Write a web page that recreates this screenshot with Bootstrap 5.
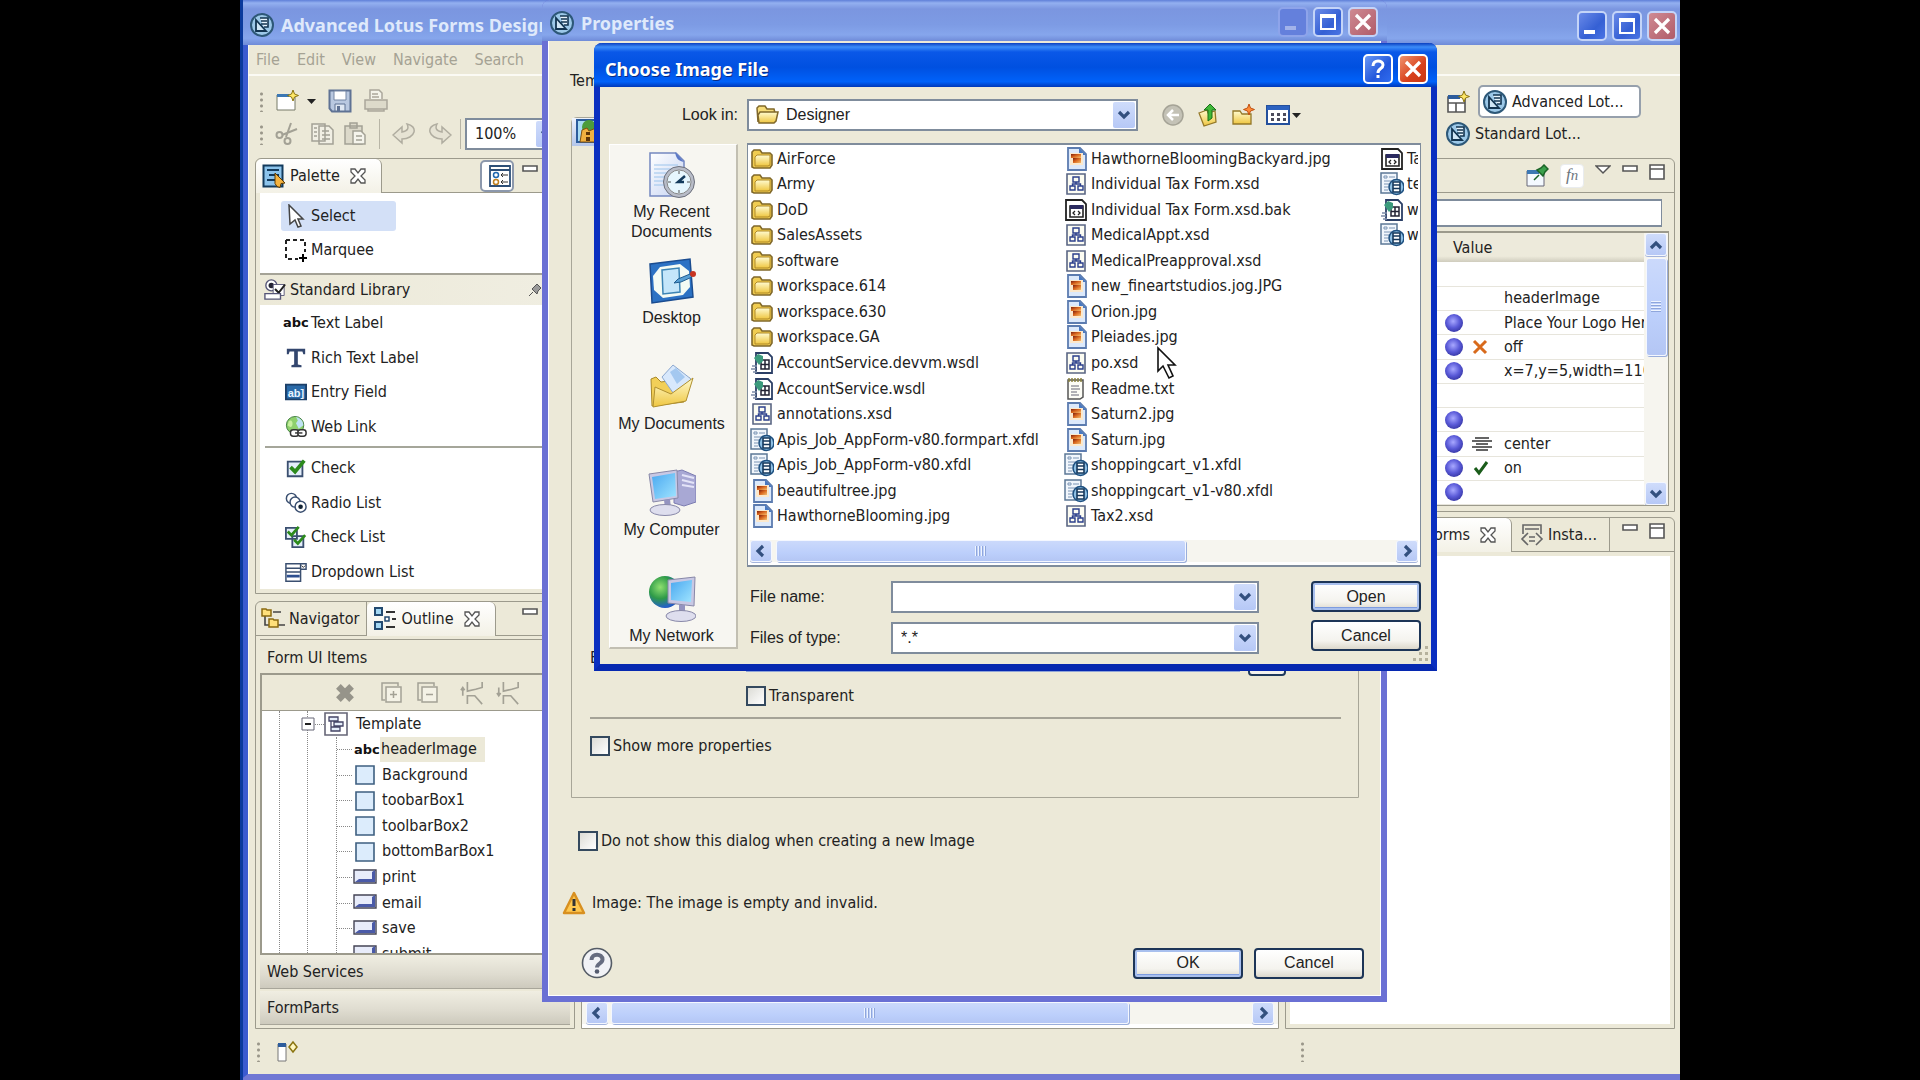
<!DOCTYPE html>
<html lang="en">
<head>
<meta charset="utf-8">
<meta name="viewport" content="width=device-width, initial-scale=1">
<title>Advanced Lotus Forms Designer</title>
<link href="https://cdn.jsdelivr.net/npm/bootstrap@5.3.0/dist/css/bootstrap.min.css" rel="stylesheet">
<style>
:root{--face:#ece9d8;--rule:#9c9a8c;--field:#7f8c9c}
body{background:#000;font:16px/20px "DejaVu Sans Condensed","DejaVu Sans",sans-serif;color:#222;overflow:hidden}
a{color:inherit;text-decoration:none}
button,select,input{font:inherit;color:inherit}
ul{list-style:none;margin:0;padding:0}
svg{flex:none;display:block}
.i24{width:24px;height:24px}.i22{width:22px;height:22px}.i48{width:48px;height:48px}
.i20{width:20px;height:18px}.i16{width:16px;height:16px}.i14{width:14px;height:14px}
.g2x{gap:2px}.g3x{gap:3px}.g5x{gap:5px}.g7x{gap:7px}.g8x{gap:8px}.g9x{gap:9px}.g11x{gap:11px}.g12x{gap:12px}
.ms-sans{font-family:"Liberation Sans",Arial,sans-serif}
.desk{width:75%;height:100vh}
.win-main{height:100%;background:var(--face);border-left:8px solid #3b5bd0;border-bottom:6px solid #7078d4;border-right:0;box-shadow:inset 1px 0 #f8f7ee}
.win-main::before{content:"";position:absolute;left:0;top:0;bottom:0;width:3px;background:#0b3a9c}
.ttl{background:linear-gradient(#5f7fd8 0,#93b0f0 3px,#7b96e0 9px,#7d9be4 60%,#86a6ec 85%,#6f8bd8 100%);color:#dfe9fb;font:bold 18px/22px "Noto Sans","Open Sans",sans-serif;white-space:nowrap}
.ttl-main{height:45px;margin-left:-5px;padding:8px 3px 0 7px}
.ttl-prop{height:41px;padding:4px 9px 0 8px;margin:0 -6px;border-radius:8px 8px 0 0}
.ttl-file{height:44px;padding:7px 9px 0 11px;margin:0 -6px;border-radius:8px 8px 0 0;background:linear-gradient(#0a3fc0 0,#3c8cf8 4px,#0a58e8 9px,#0050e0 55%,#0062fa 88%,#0038b8 100%);color:#fff;text-shadow:1px 1px #0a2a80}
.caps{display:flex;gap:5px;padding-top:3px}
.cap{width:30px;height:30px;border:2px solid #c4d4f8;border-radius:5px;background:linear-gradient(135deg,#6a8ae8,#3560d4 60%,#4a74e4);padding:0;display:flex;align-items:center;justify-content:center;color:#fff}
.cap svg{width:22px;height:22px}
.cap-x{background:linear-gradient(135deg,#cf8a92,#b05c6a)}
.cap-off{border-color:#8ea4ea;background:#6480dc}
.cap-off svg{opacity:.4}
.ttl-file .cap{border-color:#fff;background:linear-gradient(135deg,#6a98f4,#2358dc 60%,#2f6cf0)}
.ttl-file .cap-x{background:linear-gradient(135deg,#f0926c,#d8401c 60%,#c83814)}
.menus{height:31px;border-bottom:2px solid #fbfaf4;padding:0 8px;gap:17px;color:#a5a294}
.dots{width:3px;height:21px;background:radial-gradient(circle,#9a978a 1px,transparent 2px) 0 0/3px 6px}
.tool-a{height:34px}.tool-b{height:32px}
.tool-a .dots,.tool-b .dots{margin:0 12px 0 4px}
.caret{width:9px;height:5px}
.bar-v{width:1px;height:30px;background:#b8b5a6}
.zoomer{width:96px}
.perspbar{width:234px;padding-top:1px}
.persp{border:2px solid #96a0ac;border-radius:5px;background:#fff;height:33px;padding:0 10px 0 3px;width:163px}
.plainbtn{border:0;background:none;padding:0}
.bench{display:grid;grid-template-columns:320px minmax(0,1fr) 390px;gap:6px;padding:8px 5px 0 7px}
.pane{border:1px solid var(--rule);border-radius:6px 6px 0 0;background:var(--face)}
.tabs{height:34px;border-bottom:1px solid var(--rule)}
.tabx{height:34px;border:0;border-right:1px solid var(--rule);background:none;display:flex;align-items:center;white-space:nowrap;padding:0 7px 0 5px}
.tabx.on{background:linear-gradient(#fff,#f3f1e6);border-radius:6px 6px 0 0;padding:0 9px 0 6px}
.tabx.cut{padding-left:50px}
.tabx.insta{padding:0 12px 0 8px}
.tab-tools{display:flex;gap:11px;padding:5px 9px 0 12px}
.pal-on{height:32px;width:34px;border:2px solid #8c98ac;border-radius:5px;background:#fff;margin-top:-4px;margin-right:-3px}
.fnb{width:24px;height:24px;font:italic 17px/20px "Liberation Serif",serif;text-align:center}
.paper{background:#fff}
.pick-area{padding:8px 0 8px 21px}
.pick{height:30px;width:115px;padding-left:3px;gap:3px}
.pick.on{background:#d3e0f7;border-radius:3px;margin-bottom:4px}
.lib-head{height:32px;border-top:2px solid #a5a397;background:linear-gradient(90deg,#ece9d8,#f0eee2);padding-right:32px}
.lib{display:grid;grid-template-rows:repeat(4,1fr);height:138px;padding-left:25px}
.lib button,.tree3 li{display:flex;align-items:center;gap:4px;white-space:nowrap}
.lib-first{padding-top:1px;height:139px}
.hr-lib{height:2px;background:#a5a69a;margin:2px 0 3px 5px}
.abc{font:bold 13px/16px "DejaVu Sans","DejaVu Sans Condensed",sans-serif;color:#111;width:22px;margin-left:-2px;margin-right:2px}
.box-in{border:1px solid var(--rule);border-width:2px 1px 2px 2px}
.sect{margin:3px 0 0 4px;border-top:1px solid var(--rule);padding:8px 0 5px 7px}
.tree-tools{height:35px;padding-left:72px}
.tree{height:243px;overflow:hidden;background:#fff;border-top:1px solid var(--rule)}
.t1,.t2,.tree3{border-left:1px dotted #888}
.t1{margin-left:17px}.t2{margin-left:27px}.tree3{margin-left:28px;display:grid;grid-template-rows:repeat(9,1fr);height:230px}
.tnode{height:26px;margin-left:-7px}
.tdash{width:9px;border-top:1px dotted #888}
.tree3 li::before{content:"";width:15px;border-top:1px dotted #888}
.tree3 li svg{margin-left:-3px}
.tree3 li .abc{margin-left:-2px;margin-right:0}
.nm{padding:2px 8px 2px 1px;height:25px}
.nm.on{background:var(--face)}
.drawer{height:34px;background:linear-gradient(#f0eee2,#dedbcf 60%,#cdcabd);border:0;border-bottom:1px solid #a8a69a;text-align:left;padding-left:7px}
.sb{background:#f6f5ef;display:flex}
.sb-h{height:22px}.sb-v{width:24px;flex-direction:column}
.sb-mid{margin-bottom:4px}
.sb-b{background:linear-gradient(#cfdcfb,#b6c8f6);border:1px solid #f4f7ff;box-shadow:0 1px #a4b4dc;border-radius:3px;display:flex;align-items:center;justify-content:center;padding:0;color:#33507f}
.sb-h .sb-b{width:22px;height:22px}
.sb-v .sb-b{width:22px;height:23px}
.sb-t{background:linear-gradient(#cbd9fb,#bccffb 60%,#b4c6f4);border:1px solid #f4f7ff;border-radius:3px;box-shadow:1px 1px #9aaedb;display:flex;align-items:center;justify-content:center}
.sb-t::after{content:"";width:12px;height:10px;background:repeating-linear-gradient(90deg,#eef4fe 0 1px,#8fa6dc 1px 2px,transparent 2px 3px)}
.sb-v .sb-t{width:21px;height:98px;margin:2px 0 auto}
.sb-v .sb-t::after{width:10px;height:12px;background:repeating-linear-gradient(#eef4fe 0 1px,#8fa6dc 1px 2px,transparent 2px 3px)}
.th-mid{width:518px;margin:0 auto 0 3px}
.th-file{width:410px;margin:0 auto 0 4px}
.find-row{padding:6px 12px 4px}
.finder{height:28px;border:2px solid var(--field);background:#fff;border-right-width:1px;width:100%}
.props-box{border:1px solid var(--rule);border-width:2px 1px 1px;margin:0 5px 5px 0;height:275px;overflow:hidden}
.props{table-layout:fixed;width:100%;margin:0;border-collapse:collapse}
.props th{font-weight:400;height:29px;background:linear-gradient(#edeadb 80%,#cfccbd);padding:0 0 0 166px}
.props td{height:24px;padding:0;border-bottom:1px solid #e7e5dc;white-space:nowrap;overflow:hidden;line-height:20px}
.c1{width:158px}.c2{width:27px}.c3{width:32px}
.orb{width:18px;height:18px;border-radius:50%;background:radial-gradient(circle at 45% 40%,#a8a8ff,#5a5ad8 45%,#2e2e98 85%);display:block}
.status{height:45px;padding-left:9px}
.status .far{margin:0 376px 0 auto}
.win-prop{left:302px;top:0;width:845px;height:1002px;background:var(--face);border:6px solid #6a70d4;border-top:0;border-radius:8px 8px 0 0;box-shadow:inset 0 0 0 1px #fff}
.tmpl{padding:30px 0 8px 22px}
.grp{margin:18px 22px 0 23px;border:1px solid #a8a698;border-radius:6px 0 0 0;height:681px}
.grp-tab{height:28px;background:linear-gradient(#eef2fb,#b4c6ea)}
.grp-in{padding:494px 17px 0 18px}
.bg-row{height:36px}
.bg-row label{width:156px}
.tr-row{padding:10px 0 0 156px}
.etched{height:2px;background:#a5a397;margin:11px 0 17px}
.dns-row{padding:33px 0 0 30px}
.warn-row{padding:40px 0 0 14px;gap:6px}
.ok-row{padding:32px 17px 0 33px}
.ck{appearance:none;width:20px;height:20px;border:2px solid #34495e;background:linear-gradient(135deg,#dcdcd6,#fff);margin:0;flex:none}
.ck+label{margin-left:3px}
.under{height:22px;border:1px solid #8fa4d8;background:#fff;width:494px}
.etc{width:38px;height:28px;border:2px solid #1f3a5c;border-radius:4px;background:#f4f3ee}
.xpb{height:31px;width:110px;border:2px solid #1d3557;border-radius:4px;background:linear-gradient(#fff,#f4f3ee 70%,#dcd8cc);padding:0}
.xpb.def{box-shadow:inset 0 0 0 2px #a9c0ee,inset 0 -3px #7d9ce0}
.win-file{left:354px;top:43px;width:843px;background:var(--face);border:6px solid #0a2fc0;border-top:0;border-bottom:7px solid #0628b0;border-radius:8px 8px 0 0}
.fgrid{display:grid;grid-template-columns:129px minmax(0,1fr);column-gap:9px;row-gap:12px;padding:12px 10px 10px 9px}
.combo{position:relative;height:32px}
.combo select{appearance:none;width:100%;height:100%;border:2px solid var(--field);background:#fff;padding:0 28px 0 8px;border-radius:0}
.combo .dd{position:absolute;right:3px;top:3px;bottom:3px;width:22px;pointer-events:none;background:linear-gradient(#cfdcfb,#b6c8f6);color:#33507f;display:flex;align-items:center;justify-content:center;border-radius:2px}
.combo .fold{position:absolute;left:8px;top:4px;pointer-events:none}
.look{width:391px;margin-right:12px}
.look select{padding-left:37px}
.places{background:#f7f6f1;border:1px solid #fff;border-right:2px solid #c2bfb2;border-bottom:2px solid #c2bfb2;margin-top:1px;height:505px;overflow:hidden;padding:6px 3px 0 0}
.places a{display:flex;flex-direction:column;align-items:center;text-align:center;height:106px;gap:3px;line-height:20px;color:#222}
.list{border:2px solid var(--field);border-width:2px 1px;background:#fff;height:424px;padding:1px 2px 3px}
.files{display:grid;grid-template-rows:repeat(15,1fr);grid-auto-flow:column;grid-template-columns:314px 316px 314px;height:383px;overflow:hidden}
.files li{display:flex;align-items:center;gap:3px;white-space:nowrap}
.files svg{width:24px;height:24px}
.fields{margin-top:14px}
.fields label{width:144px;padding-left:3px}
.fields .combo{width:368px}
.grip{right:2px;bottom:2px;width:18px;height:18px}
.ptr{left:917px;top:346px;width:22px;height:34px}
</style>
</head>
<body>
<svg width="0" height="0" class="position-absolute" aria-hidden="true"><defs>
<linearGradient id="gy" x1="0" y1="0" x2="0" y2="1"><stop offset="0" stop-color="#fffbd0"/><stop offset="1" stop-color="#efc640"/></linearGradient>
<linearGradient id="gb" x1="0" y1="0" x2="1" y2="1"><stop offset="0" stop-color="#4aa8f0"/><stop offset="1" stop-color="#9fe4ff"/></linearGradient>
<linearGradient id="gp" x1="0" y1="0" x2="1" y2="1"><stop offset="0" stop-color="#ffffff"/><stop offset="1" stop-color="#c4d2f2"/></linearGradient>
<linearGradient id="go" x1="0" y1="0" x2="1" y2="1"><stop offset="0" stop-color="#7c2010"/><stop offset=".45" stop-color="#d8641c"/><stop offset="1" stop-color="#f4c070"/></linearGradient>
<radialGradient id="gg" cx=".35" cy=".35" r=".8"><stop offset="0" stop-color="#8fe070"/><stop offset=".45" stop-color="#2e9a48"/><stop offset=".8" stop-color="#2460c8"/><stop offset="1" stop-color="#103c98"/></radialGradient>
<symbol id="lotus" viewBox="0 0 24 24"><circle cx="12" cy="12" r="11" fill="#9cc8e8" stroke="#2d5878" stroke-width="2"/><path d="M10 5h8v9h-4M11 8h6M11 11h6" fill="#e8f4fc" stroke="#123450" stroke-width="1.6"/><path d="M6 7v11h10z" fill="#cfe6f5" stroke="#123450" stroke-width="1.8"/></symbol>
<symbol id="dn" viewBox="0 0 14 14"><path d="M2 4l5 5 5-5" fill="none" stroke="currentColor" stroke-width="3.2"/></symbol>
<symbol id="up" viewBox="0 0 14 14"><path d="M2 10l5-5 5 5" fill="none" stroke="currentColor" stroke-width="3.2"/></symbol>
<symbol id="lf" viewBox="0 0 14 14"><path d="M9 2L4 7l5 5" fill="none" stroke="currentColor" stroke-width="3.2"/></symbol>
<symbol id="rt" viewBox="0 0 14 14"><path d="M5 2l5 5-5 5" fill="none" stroke="currentColor" stroke-width="3.2"/></symbol>
<symbol id="w-min" viewBox="0 0 22 22"><path d="M3 15h11v4H3z" fill="#fff"/></symbol>
<symbol id="w-max" viewBox="0 0 22 22"><path d="M4 5h14v13H4z" fill="none" stroke="#fff" stroke-width="2"/><path d="M3 3h16v4H3z" fill="#fff"/></symbol>
<symbol id="w-x" viewBox="0 0 22 22"><path d="M4 4l14 14M18 4L4 18" stroke="#fff" stroke-width="3.2"/></symbol>
<symbol id="vx" viewBox="0 0 18 18"><path d="M2 2h4l3 4 3-4h4v3l-4 4 4 4v3h-4l-3-4-3 4H2v-3l4-4-4-4z" fill="#fff" stroke="#555" stroke-width="1.3"/></symbol>
<symbol id="vmin" viewBox="0 0 16 16"><path d="M1 2h14v5H1z" fill="#fff" stroke="#555" stroke-width="1.6"/></symbol>
<symbol id="vmax" viewBox="0 0 16 16"><path d="M1 1h14v14H1zM1 5h14" fill="#fff" stroke="#555" stroke-width="1.6"/></symbol>
<symbol id="new" viewBox="0 0 24 24"><path d="M2 6h18v15H2z" fill="#fff" stroke="#777a68"/><path d="M2 5h12v3H2z" fill="#3c78b4"/><path d="M18 1l1.500 4 4 1.500-4 1.500-1.500 4-1.500-4-4-1.500 4-1.500z" fill="#ffe868" stroke="#8a7410"/></symbol>
<symbol id="save" viewBox="0 0 24 24"><path d="M1.500 1.500h21v21H4l-2.500-3z" fill="#b9c8e0" stroke="#5f7294" stroke-width="2"/><path d="M6 2h12v9H6z" fill="#fff" stroke="#7486a4"/><path d="M7 15h10v7H7z" fill="#dfe7f2" stroke="#5f7294"/><path d="M9 17h3v5H9z" fill="#5f7294"/></symbol>
<symbol id="prn" viewBox="0 0 24 24"><path d="M6 10V1h9l3 3v6M8 5h6M8 8h7" fill="#f4f3ea" stroke="#aaa79b" stroke-width="1.500"/><path d="M1 11h22v9H1zM4 20h16v2H4z" fill="#dddaca" stroke="#aaa79b" stroke-width="1.500"/></symbol>
<symbol id="cut" viewBox="0 0 24 24"><g fill="none" stroke="#a3a195" stroke-width="2"><path d="M16 1l-5 14M22 7L7 13"/><circle cx="4.500" cy="13" r="3"/><circle cx="12.500" cy="19" r="3"/></g></symbol>
<symbol id="cpy" viewBox="0 0 24 24"><g fill="#f1efe4" stroke="#a3a195" stroke-width="1.500"><path d="M1 2h13v17H1zM8 4h10l4 4v14H8z"/><path d="M11 9h7M11 13h8M11 17h8M3 6h3M3 10h3M3 14h3"/></g></symbol>
<symbol id="pst" viewBox="0 0 24 24"><g fill="#dcd9ca" stroke="#a3a195" stroke-width="1.500"><path d="M2 4h17v18H2zM7 1h7v5H7z"/><path d="M10 9h8l4 4v9H10z" fill="#f5f4ec"/><path d="M13 14h6M13 18h6"/></g></symbol>
<symbol id="und" viewBox="0 0 24 24"><path d="M1 13l9-8v5c6-1 7-4 5-8 5 1 8 4 7 8-1 4-6 7-12 7v4z" fill="#e6e3d4" stroke="#b0ada0" stroke-width="1.500"/></symbol>
<symbol id="red" viewBox="0 0 24 24"><path d="M23 13l-9-8v5c-6-1-7-4-5-8-5 1-8 4-7 8 1 4 6 7 12 7v4z" fill="#e6e3d4" stroke="#b0ada0" stroke-width="1.500"/></symbol>
<symbol id="pal" viewBox="0 0 24 24"><path d="M1.500 1.500h19v21h-19z" fill="#8cc4ec" stroke="#123a5c" stroke-width="2"/><path d="M5 6h12M7 11h10M5 16h8" stroke="#123a5c" stroke-width="2"/><path d="M13 9l10 10-4 .5-1 4-3-1-2-3z" fill="#f4b340" stroke="#5c3a00"/></symbol>
<symbol id="plb" viewBox="0 0 24 24"><path d="M2 2h20v20H2zM2 6h20" fill="#fff" stroke="#2d4f78" stroke-width="1.800"/><circle cx="8" cy="11" r="2.500" fill="none" stroke="#2068b0" stroke-width="1.500"/><circle cx="8" cy="18" r="2.500" fill="none" stroke="#c08020" stroke-width="1.500"/><path d="M13 11h7M15 9l-2 2 2 2M13 18h7M15 16l-2 2 2 2" stroke="#333" fill="none"/></symbol>
<symbol id="arw" viewBox="0 0 24 24"><path d="M5 1l14 14h-5l3 7-3 1-3-7-5 4z" fill="#fff" stroke="#444" stroke-width="1.500"/></symbol>
<symbol id="mrq" viewBox="0 0 24 24"><path d="M2 2h19v12M2 2v19h12" fill="none" stroke="#222" stroke-width="2" stroke-dasharray="4 3"/><path d="M19 16v8M15 20h8" stroke="#000" stroke-width="2"/></symbol>
<symbol id="lib" viewBox="0 0 24 24"><circle cx="8" cy="7" r="6" fill="#fff" stroke="#557" stroke-width="1.500"/><circle cx="8" cy="7" r="3" fill="#223"/><path d="M10 6h12v12H10z" fill="#fff" stroke="#557"/><path d="M12 11l4 4 7-9" fill="none" stroke="#222" stroke-width="2.200"/><path d="M1 16h17v6H1z" fill="#fff" stroke="#557" stroke-width="1.500"/></symbol>
<symbol id="pin" viewBox="0 0 14 14"><path d="M1 13l4-4M4 6l5 5 1-3 3-3-4-4-3 3z" fill="#999" stroke="#555"/></symbol>
<symbol id="tt" viewBox="0 0 24 24"><path d="M2 2h20v6h-2l-1-3h-5v14l4 1v2H7v-2l3-1V5H5L4 8H2z" fill="#33466e"/></symbol>
<symbol id="ent" viewBox="0 0 24 24"><path d="M1 4h22v16H1z" fill="#2a6aa8" stroke="#1b3f68" stroke-width="2"/><text x="3" y="17" font-size="12" font-weight="bold" fill="#e8f4ff" font-family="Liberation Sans">ab]</text></symbol>
<symbol id="web" viewBox="0 0 24 24"><circle cx="11" cy="10" r="9.500" fill="#8ed06c" stroke="#3b7a3c"/><path d="M12 1c5 1 8 5 8 9l-5 4-3-6 2-3z" fill="#bfe2f4"/><path d="M4 6c3-3 5 1 4 4s-3 2-5 0z" fill="#c8f0a0"/><g fill="#fff" stroke="#333" stroke-width="1.600"><rect x="6" y="15" width="9" height="7" rx="3"/><rect x="14" y="15" width="9" height="7" rx="3"/><path d="M11 18.500h8"/></g></symbol>
<symbol id="chk" viewBox="0 0 24 24"><path d="M3 5h16v16H3z" fill="#e4eefa" stroke="#3a4f70" stroke-width="2"/><path d="M6 11l5 5L21 4" fill="none" stroke="#2c8a1c" stroke-width="4"/></symbol>
<symbol id="rad" viewBox="0 0 24 24"><g fill="#fff" stroke="#3a4f70" stroke-width="1.600"><circle cx="7" cy="7" r="5.500"/><circle cx="11" cy="11" r="5.500"/><circle cx="17" cy="16" r="6"/></g><circle cx="17" cy="16" r="2.500" fill="#123"/></symbol>
<symbol id="ckl" viewBox="0 0 24 24"><path d="M1 2h12v12H1zM8 11h12v12H8z" fill="#e4eefa" stroke="#3a4f70" stroke-width="2"/><path d="M3 6l4 4 8-9M10 15l4 4 8-9" fill="none" stroke="#2c8a1c" stroke-width="3"/></symbol>
<symbol id="drp" viewBox="0 0 24 24"><path d="M1 3h16v19H1zM1 8h16M1 12h16M17 3h6v6h-6z" fill="#fff" stroke="#3a4f70" stroke-width="1.600"/><path d="M2 15h14v3H2z" fill="#2d4f90"/><path d="M18 5l2 2 2-2" stroke="#222" fill="none"/></symbol>
<symbol id="nav" viewBox="0 0 24 24"><path d="M4 7v11h5M12 5h8M17 18h7" stroke="#444" fill="none" stroke-width="1.600"/><path d="M1 2h4l1 1h4v6H1zM8 12h4l1 1h4v7H8z" fill="#ffe07a" stroke="#8a6a10" stroke-width="1.500"/></symbol>
<symbol id="otl" viewBox="0 0 24 24"><g fill="#a4d8f4" stroke="#234a70" stroke-width="2"><path d="M2 1h7v7H2zM2 15h7v7H2z"/></g><path d="M13 5h9M13 20h9M19 12h4" stroke="#333" stroke-width="2"/><path d="M12 10h4v4h-4z" fill="#fff" stroke="#234a70" stroke-width="1.500"/></symbol>
<symbol id="del" viewBox="0 0 20 20"><path d="M4 4l12 12M16 4L4 16" stroke="#96948a" stroke-width="6"/></symbol>
<symbol id="exp" viewBox="0 0 24 24"><path d="M5 19H2V2h16v3" fill="none" stroke="#a3a195" stroke-width="1.500"/><path d="M6 6h15v15H6zM10 13.500h7M13.500 10v7" fill="#f4f2e6" stroke="#a3a195" stroke-width="1.500"/></symbol>
<symbol id="col" viewBox="0 0 24 24"><path d="M5 19H2V2h16v3" fill="none" stroke="#a3a195" stroke-width="1.500"/><path d="M6 6h15v15H6zM10 13.500h7" fill="#f4f2e6" stroke="#a3a195" stroke-width="1.500"/></symbol>
<symbol id="mvu" viewBox="0 0 26 26"><path d="M3 16V7M1 10l2-3 2 3M8 1v10l9-2 7-2V1M8 25v-9h8l8 9" fill="none" stroke="#a3a195" stroke-width="1.800"/></symbol>
<symbol id="mvd" viewBox="0 0 26 26"><path d="M3 7v9M1 13l2 3 2-3M8 1v10l9-2 7-2V1M8 25v-9h8l8 9" fill="none" stroke="#a3a195" stroke-width="1.800"/></symbol>
<symbol id="tpl" viewBox="0 0 24 24"><path d="M1 1h22v22H1z" fill="#fff" stroke="#667" stroke-width="1.600"/><path d="M5 5h9v4H5zM10 10h9v4h-9zM7 15h9v4H7zM7 9v6" fill="#e6eefa" stroke="#446" stroke-width="1.300"/></symbol>
<symbol id="bx" viewBox="0 0 24 24"><path d="M3 3h18v18H3z" fill="#dcecfc" stroke="#3e5f80" stroke-width="1.600"/></symbol>
<symbol id="bt" viewBox="0 0 24 24"><path d="M1 4h22v13H1z" fill="#e8ecfa" stroke="#445" stroke-width="1.400"/><path d="M2 16l4-3h13V6l3-2v12z" fill="#4a5aa8"/></symbol>
<symbol id="dir" viewBox="0 0 24 24"><path d="M2 20V5l2-2h6l2 3h8l2 2v10l-2 3H4z" fill="#f0cc50" stroke="#80682a" stroke-width="1.600"/><path d="M5 10l2-2h13v10l-2 1H5z" fill="url(#gy)" stroke="#b08a28"/></symbol>
<symbol id="dio" viewBox="0 0 24 24"><path d="M3 19L2 5l2-2h6l2 3h7l1 4" fill="#f6dc78" stroke="#80682a" stroke-width="1.500"/><path d="M4 20l-1-8 2-3h18l-2 9-2 2z" fill="url(#gy)" stroke="#80682a" stroke-width="1.500"/></symbol>
<symbol id="wsd" viewBox="0 0 24 24"><path d="M6 2h12l4 4v16H6z" fill="#fff" stroke="#2b3f66" stroke-width="1.800"/><path d="M11 9h8v9h-8zM11 13.500h8M15 9v9" fill="none" stroke="#223" stroke-width="1.500"/><path d="M4 7l4-4 5 2v5l-4 4z" fill="#3b9a7c"/><path d="M2 15h5M1 18h5M3 21h4" stroke="#7c8ca8" stroke-width="1.300"/></symbol>
<symbol id="xsd" viewBox="0 0 24 24"><path d="M3 2h18v20H3z" fill="#fcfcf2" stroke="#5a6684" stroke-width="1.600"/><path d="M9 5h6v5H9zM6 14h5v4H6zM14 14h5v4h-5zM12 10v2M8.500 14v-2h8v2" fill="none" stroke="#2b3f8c" stroke-width="1.400"/></symbol>
<symbol id="xfd" viewBox="0 0 24 24"><path d="M1 1h16v20H1z" fill="#f1f6fc" stroke="#5c7896" stroke-width="1.500"/><path d="M4 4h3v2H4zM9 5h6M4 9h8M4 12h5M4 15h4M4 18h4" stroke="#7a94b4" fill="none"/><circle cx="16.500" cy="15" r="7.500" fill="#8fc0e4" stroke="#1e5080" stroke-width="1.600"/><path d="M13 10h7v10h-7z" fill="#fff" stroke="#16385c" stroke-width="1.600"/><path d="M13 13h7M13 16.500h7" stroke="#16385c" stroke-width="1.600"/></symbol>
<symbol id="jpg" viewBox="0 0 24 24"><path d="M4 1h12l6 6v16H4z" fill="#dce9fb" stroke="#5c7cb0" stroke-width="1.800"/><path d="M15 1l7 7h-7z" fill="#4878c0"/><path d="M6 6h13v12H6z" fill="#fbe8cc"/><path d="M7 7h10v4H7z" fill="url(#go)"/><path d="M9 11h8v5H9z" fill="url(#go)"/></symbol>
<symbol id="bak" viewBox="0 0 24 24"><path d="M2 2h16l4 4v16H2z" fill="#fff" stroke="#222" stroke-width="1.800"/><path d="M6 8h13v11H6z" fill="#fff" stroke="#222" stroke-width="1.600"/><path d="M6 7h13v4H6z" fill="#2b2b60"/><path d="M11 13l-2 2 2 2M14 13l2 2-2 2" fill="none" stroke="#222" stroke-width="1.300"/></symbol>
<symbol id="txt" viewBox="0 0 24 24"><path d="M4 3h15v17l-3 2H4z" fill="#fdfdf6" stroke="#555" stroke-width="1.500"/><path d="M5 1v4M8 1v4M11 1v4M14 1v4M17 1v4" stroke="#8a8340" stroke-width="1.500"/><path d="M7 9h8M7 12h9M7 15h6M7 18h8" stroke="#667"/></symbol>
<symbol id="recent" viewBox="0 0 48 48"><path d="M2 2h26l8 8v35H2z" fill="url(#gp)" stroke="#7488c0" stroke-width="1.500"/><path d="M27 1c1 6 3 9 9 10z" fill="#5a78c8"/><path d="M6 14h24M6 18h20M6 22h16M6 26h14M6 30h12M6 34h12" stroke="#9cc4ec"/><circle cx="31" cy="31" r="15.500" fill="#b8bcc8" stroke="#6c707c"/><circle cx="31" cy="31" r="12" fill="#e6f6fe" stroke="#888"/><path d="M37 25l-7 6h6" stroke="#133a5c" stroke-width="2.500" fill="none"/><path d="M31 20v3M31 39v3M20 31h3M39 31h3" stroke="#555"/></symbol>
<symbol id="dsktop" viewBox="0 0 48 48"><path d="M2 7L42 2l3 38L4 46z" fill="#2c72c4" stroke="#1a4c90" stroke-width="1.500"/><path d="M12 10l20-3 9 7 1 16-7 8-20 3-9-8-1-14z" fill="#f4fbf4"/><path d="M14 13l17-2 1 24-17 2z" fill="#c4e6fa" stroke="#3c84b4" stroke-width="1.500"/><path d="M26 26l4-4 12-5 2 3-11 5z" fill="#58a0d4" stroke="#1f5c90"/><circle cx="45" cy="17" r="3" fill="#c83420"/></symbol>
<symbol id="docs" viewBox="0 0 48 48"><path d="M4 43L3 16l5-2 5 5 29-4-6 24z" fill="#f2cf58" stroke="#a88828"/><path d="M14 14L25 2l18 14-15 18z" fill="#d8e8fc" stroke="#8ca8d0"/><path d="M22 9l6-4 9 9-8 7z" fill="#a4c8f0"/><path d="M5 44l2-20 16 7 22-16-7 23z" fill="url(#gy)" stroke="#b09030"/></symbol>
<symbol id="comp" viewBox="0 0 48 48"><path d="M26 3l8-2 14 6v26l-12 4-10-3z" fill="#a8a8d4" stroke="#7c7cb0"/><path d="M34 6l12 3M34 11l12 3M34 16l12 2" stroke="#e4e4f8" stroke-width="2"/><path d="M1 5l28-4 1 28-25 4z" fill="#c8c8e4" stroke="#8888a8"/><path d="M4 8l23-4 1 23-21 3z" fill="url(#gb)"/><path d="M16 31l6-1 1 9h-6z" fill="#9494c0"/><ellipse cx="17" cy="41" rx="15" ry="5.500" fill="#dedeee" stroke="#8888a8"/></symbol>
<symbol id="netw" viewBox="0 0 48 48"><circle cx="17" cy="17" r="16" fill="url(#gg)"/><path d="M20 5l27-3-1 29-26-3z" fill="#c8c8e4" stroke="#8888a8"/><path d="M23 8l21-3-1 22-20-2z" fill="url(#gb)"/><path d="M31 30h6v9h-6z" fill="#9494c0"/><ellipse cx="33" cy="41" rx="15" ry="5.500" fill="#dedeee" stroke="#8888a8"/></symbol>
<symbol id="bk" viewBox="0 0 24 24"><circle cx="12" cy="12" r="10" fill="#c4c2b6" stroke="#a5a396" stroke-width="1.500"/><path d="M18 12H8M12 7l-5 5 5 5" fill="none" stroke="#fff" stroke-width="2.500"/></symbol>
<symbol id="fup" viewBox="0 0 24 24"><path d="M3 10l8-3 1 3 7-2 1 11-12 4z" fill="url(#gy)" stroke="#947828" stroke-width="1.300"/><path d="M12 18V7H8l6-6 6 6h-4v8z" fill="#40b838" stroke="#187018"/></symbol>
<symbol id="fnw" viewBox="0 0 24 24"><path d="M2 8h7l2 3h9v10H2z" fill="url(#gy)" stroke="#947828" stroke-width="1.300"/><path d="M18 1l1.500 4 4 1.500-4 1.500-1.500 4-1.500-4-4-1.500 4-1.500z" fill="#ff8c38" stroke="#c05010"/></symbol>
<symbol id="vws" viewBox="0 0 24 24"><path d="M1 3h22v18H1z" fill="#fff" stroke="#24509c" stroke-width="2"/><path d="M1 3h22v4H1z" fill="#2c62c0"/><path d="M5 10h3v3H5zM11 10h3v3h-3zM17 10h3v3h-3zM5 15h3v3H5zM11 15h3v3h-3zM17 15h3v3h-3z" fill="#4c4c5c"/></symbol>
<symbol id="opp" viewBox="0 0 24 24"><path d="M2 7h17v15H2zM2 13h17M10 13v9" fill="#fff" stroke="#555" stroke-width="1.600"/><path d="M2 5h12v4H2z" fill="#2d5c9c"/><path d="M18 1l1.500 4 4 1.500-4 1.500-1.500 4-1.500-4-4-1.500 4-1.500z" fill="#ffe868" stroke="#8a7410"/></symbol>
<symbol id="ppn" viewBox="0 0 24 24"><path d="M2 7h17v15H2z" fill="#f4f9ff" stroke="#667"/><path d="M2 6h12v4H2z" fill="#3c78b4"/><path d="M9 16l5-5M12 6l6 6 2-4 3-3-4-4-3 3z" fill="#3ba04c" stroke="#1c6428" stroke-width="1.500"/></symbol>
<symbol id="ins" viewBox="0 0 24 24"><path d="M3 11V2h18v9M5 6h14" fill="none" stroke="#666" stroke-width="1.600" /><path d="M8 10l-6 6 6 6M16 10l6 6-6 6M9 14h6M9 18h6" fill="none" stroke="#666" stroke-width="1.600"/></symbol>
<symbol id="caret" viewBox="0 0 9 5"><path d="M0 0h9L4.500 5z" fill="#222"/></symbol>
</defs></svg>

<div class="desk mx-auto position-relative overflow-hidden">
<main class="win-main d-flex flex-column">
  <header class="ttl ttl-main d-flex">
    <div class="d-flex align-items-center flex-grow-1 g7x pb-1"><svg class="i24"><use href="#lotus"/></svg>Advanced Lotus Forms Designer</div>
    <div class="caps"><button class="cap" aria-label="Minimize"><svg><use href="#w-min"/></svg></button><button class="cap" aria-label="Maximize"><svg><use href="#w-max"/></svg></button><button class="cap cap-x" aria-label="Close"><svg><use href="#w-x"/></svg></button></div>
  </header>
  <nav class="menus d-flex align-items-center"><a href="#">File</a><a href="#">Edit</a><a href="#">View</a><a href="#">Navigate</a><a href="#">Search</a></nav>
  <div class="d-flex justify-content-between pt-2">
    <div class="ps-2">
      <div class="tool-a d-flex align-items-center"><span class="dots"></span>
        <button class="plainbtn" aria-label="New"><svg class="i24"><use href="#new"/></svg></button>
        <svg class="caret ms-2 me-2"><use href="#caret"/></svg>
        <button class="plainbtn ms-1 me-2" aria-label="Save"><svg class="i24"><use href="#save"/></svg></button>
        <button class="plainbtn ms-1" aria-label="Print"><svg class="i24"><use href="#prn"/></svg></button></div>
      <div class="tool-b d-flex align-items-center"><span class="dots"></span>
        <button class="plainbtn me-2" aria-label="Cut"><svg class="i24"><use href="#cut"/></svg></button>
        <button class="plainbtn ms-1" aria-label="Copy"><svg class="i24"><use href="#cpy"/></svg></button>
        <button class="plainbtn mx-2" aria-label="Paste"><svg class="i24"><use href="#pst"/></svg></button>
        <span class="bar-v me-2 ms-1"></span>
        <button class="plainbtn ms-1 me-2" aria-label="Undo"><svg class="i24"><use href="#und"/></svg></button>
        <button class="plainbtn ms-1" aria-label="Redo"><svg class="i24"><use href="#red"/></svg></button>
        <span class="bar-v ms-2 me-1"></span>
        <div class="combo zoomer"><select aria-label="Zoom"><option>100%</option></select><span class="dd"><svg class="i14"><use href="#dn"/></svg></span></div></div>
    </div>
    <div class="perspbar">
      <div class="d-flex align-items-center g8x"><button class="plainbtn" aria-label="Open perspective"><svg class="i24"><use href="#opp"/></svg></button><button class="persp d-flex align-items-center g5x"><svg class="i24"><use href="#lotus"/></svg>Advanced Lot...</button></div>
      <button class="plainbtn d-flex align-items-center tool-b g5x"><svg class="i24"><use href="#lotus"/></svg>Standard Lot...</button>
    </div>
  </div>

  <div class="bench flex-grow-1">
    <div class="d-flex flex-column g7x">
      <section class="pane">
        <div class="tabs d-flex justify-content-between">
          <button class="tabx on"><svg class="i24 me-1"><use href="#pal"/></svg>Palette<svg class="i20 ms-2 me-1"><use href="#vx"/></svg></button>
          <div class="tab-tools"><button class="pal-on" aria-label="Palette view"><svg class="i24 mx-auto"><use href="#plb"/></svg></button><svg class="i16"><use href="#vmin"/></svg><svg class="i16"><use href="#vmax"/></svg></div>
        </div>
        <div class="paper ms-1">
          <div class="pick-area"><button class="plainbtn pick on d-flex align-items-center"><svg class="i24"><use href="#arw"/></svg>Select</button><button class="plainbtn pick d-flex align-items-center"><svg class="i24"><use href="#mrq"/></svg>Marquee</button></div>
          <div class="lib-head d-flex align-items-center ps-1"><svg class="i22 me-1"><use href="#lib"/></svg>Standard Library<svg class="i14 ms-auto"><use href="#pin"/></svg></div>
          <div class="lib lib-first">
            <button class="plainbtn"><span class="abc text-start">abc</span>Text Label</button>
            <button class="plainbtn"><svg class="i22"><use href="#tt"/></svg>Rich Text Label</button>
            <button class="plainbtn"><svg class="i22"><use href="#ent"/></svg>Entry Field</button>
            <button class="plainbtn"><svg class="i22"><use href="#web"/></svg>Web Link</button>
          </div>
          <div class="hr-lib"></div>
          <div class="lib">
            <button class="plainbtn"><svg class="i22"><use href="#chk"/></svg>Check</button>
            <button class="plainbtn"><svg class="i22"><use href="#rad"/></svg>Radio List</button>
            <button class="plainbtn"><svg class="i22"><use href="#ckl"/></svg>Check List</button>
            <button class="plainbtn"><svg class="i22"><use href="#drp"/></svg>Dropdown List</button>
          </div>
        </div>
        <div class="pt-1"></div>
      </section>
      <section class="pane flex-grow-1 d-flex flex-column">
        <div class="tabs d-flex">
          <button class="tabx"><svg class="i24 me-1"><use href="#nav"/></svg>Navigator</button>
          <button class="tabx on"><svg class="i24 me-1"><use href="#otl"/></svg>Outline<svg class="i20 ms-2 me-1"><use href="#vx"/></svg></button>
          <div class="tab-tools ms-auto"><svg class="i16"><use href="#vmin"/></svg><svg class="i16"><use href="#vmax"/></svg></div>
        </div>
        <div class="sect">Form UI Items</div>
        <div class="box-in ms-1">
          <div class="tree-tools d-flex align-items-center">
            <svg class="i22 me-4"><use href="#del"/></svg><svg class="i24 me-2"><use href="#exp"/></svg><svg class="i24 ms-1 me-3"><use href="#col"/></svg><svg class="i24 ms-1 me-2"><use href="#mvu"/></svg><svg class="i24 ms-1 me-4"><use href="#mvd"/></svg><svg class="i22"><use href="#drp"/></svg></div>
          <div class="tree"><div class="t1"><div class="t2">
            <div class="tnode d-flex align-items-center"><svg class="i14" viewBox="0 0 14 14"><path d="M1 1h12v12H1z" fill="#fff" stroke="#667"/><path d="M4 7h6" stroke="#222" stroke-width="2"/></svg><span class="tdash"></span><svg class="i24"><use href="#tpl"/></svg><span class="ps-1 ms-1">Template</span></div>
            <ul class="tree3">
              <li><span class="abc">abc</span><span class="nm on">headerImage</span></li>
              <li><svg class="i24"><use href="#bx"/></svg><span class="nm">Background</span></li>
              <li><svg class="i24"><use href="#bx"/></svg><span class="nm">toobarBox1</span></li>
              <li><svg class="i24"><use href="#bx"/></svg><span class="nm">toolbarBox2</span></li>
              <li><svg class="i24"><use href="#bx"/></svg><span class="nm">bottomBarBox1</span></li>
              <li><svg class="i24"><use href="#bt"/></svg><span class="nm">print</span></li>
              <li><svg class="i24"><use href="#bt"/></svg><span class="nm">email</span></li>
              <li><svg class="i24"><use href="#bt"/></svg><span class="nm">save</span></li>
              <li><svg class="i24"><use href="#bt"/></svg><span class="nm">submit</span></li>
            </ul></div></div></div>
        </div>
        <div class="d-flex flex-column ms-1 me-1 g2x"><button class="drawer">Web Services</button><button class="drawer">FormParts</button></div>
      </section>
    </div>
    <section class="pane d-flex flex-column justify-content-end paper">
      <div class="sb sb-h sb-mid px-1"><div class="sb-b"><svg class="i14"><use href="#lf"/></svg></div><div class="sb-t th-mid"></div><div class="sb-b"><svg class="i14"><use href="#rt"/></svg></div></div>
    </section>
    <div class="d-flex flex-column g5x">
      <section class="pane">
        <div class="tabs d-flex justify-content-end"><div class="tab-tools"><svg class="i24"><use href="#ppn"/></svg><span class="fnb border border-secondary-subtle rounded-1 bg-white text-secondary">f<small>n</small></span><svg class="i16" viewBox="0 0 16 16"><path d="M1 2h14L8 9z" fill="#fff" stroke="#555" stroke-width="1.500"/></svg><svg class="i16"><use href="#vmin"/></svg><svg class="i16"><use href="#vmax"/></svg></div></div>
        <div class="find-row"><input class="finder d-block" aria-label="Filter properties"></div>
        <div class="props-box d-flex paper">
          <table class="props"><colgroup><col class="c1"><col class="c2"><col class="c3"><col></colgroup>
            <thead><tr><th colspan="4">Value</th></tr></thead>
            <tbody>
            <tr><td></td><td></td><td></td><td></td></tr>
            <tr><td></td><td></td><td></td><td>headerImage</td></tr>
            <tr><td></td><td><i class="orb"></i></td><td></td><td>Place Your Logo Here</td></tr>
            <tr><td></td><td><i class="orb"></i></td><td><svg width="18" height="16"><path d="M2 2l12 12M14 2L2 14" stroke="#d86a1c" stroke-width="3"/></svg></td><td>off</td></tr>
            <tr><td></td><td><i class="orb"></i></td><td></td><td>x=7,y=5,width=110</td></tr>
            <tr><td></td><td></td><td></td><td></td></tr>
            <tr><td></td><td><i class="orb"></i></td><td></td><td></td></tr>
            <tr><td></td><td><i class="orb"></i></td><td><svg width="20" height="18"><path d="M3 3h14M0 6h20M4 9h12M0 12h20M4 15h12" stroke="#333" stroke-width="1.600"/></svg></td><td>center</td></tr>
            <tr><td></td><td><i class="orb"></i></td><td><svg width="20" height="16"><path d="M3 8l4 5L15 2" fill="none" stroke="#1a5c1a" stroke-width="3"/></svg></td><td>on</td></tr>
            <tr><td></td><td><i class="orb"></i></td><td></td><td></td></tr>
            </tbody></table>
          <div class="sb sb-v align-items-center flex-shrink-0"><div class="sb-b"><svg class="i14"><use href="#up"/></svg></div><div class="sb-t"></div><div class="sb-b"><svg class="i14"><use href="#dn"/></svg></div></div>
        </div>
      </section>
      <section class="pane flex-grow-1 d-flex flex-column">
        <div class="tabs d-flex justify-content-end"><button class="tabx on cut">Forms<svg class="i20 ms-2 me-1"><use href="#vx"/></svg></button><button class="tabx insta"><svg class="i24 me-1"><use href="#ins"/></svg>Insta...</button><div class="tab-tools"><svg class="i16"><use href="#vmin"/></svg><svg class="i16"><use href="#vmax"/></svg></div></div>
        <div class="paper flex-grow-1 m-1"></div>
      </section>
    </div>
  </div>
  <footer class="status d-flex align-items-center"><span class="dots"></span><svg class="i24 ms-3" viewBox="0 0 24 24"><path d="M2 4h8v17H2z" fill="#fff" stroke="#777"/><path d="M2 3h8v4H2z" fill="#2d5c9c"/><path d="M17 2l4 5-4 5-4-5z" fill="#fff7c0" stroke="#8a7410" stroke-width="1.500"/></svg><span class="dots far"></span></footer>
</main>

<section class="win-prop position-absolute" role="dialog" aria-label="Properties">
  <header class="ttl ttl-prop d-flex"><div class="d-flex align-items-center flex-grow-1 g7x"><svg class="i24"><use href="#lotus"/></svg>Properties</div><div class="caps"><button class="cap cap-off" aria-label="Minimize"><svg><use href="#w-min"/></svg></button><button class="cap" aria-label="Maximize"><svg><use href="#w-max"/></svg></button><button class="cap cap-x" aria-label="Close"><svg><use href="#w-x"/></svg></button></div></header>
  <div class="tmpl">Template</div>
  <div class="grp"><div class="grp-tab"><svg width="24" height="26" class="ms-1"><path d="M1 2h22v22H1z" fill="#a8dcf4" stroke="#2c5c9c" stroke-width="2"/><circle cx="13" cy="9" r="7" fill="#4c9c3c"/><path d="M4 24l2-12 5-2 2 3 7-3v14z" fill="#f0b040" stroke="#805010"/><path d="M10 14h4v3h-4zM10 19h4v4h-4z" fill="#5c3408"/></svg></div>
    <div class="grp-in">
      <div class="bg-row d-flex align-items-end"><label for="bg" class="mb-2">Background</label><input id="bg" class="under mb-1"><button class="etc ms-2" aria-label="Browse"></button></div>
      <div class="tr-row d-flex align-items-center"><input type="checkbox" class="ck" id="tr"><label for="tr">Transparent</label></div>
      <div class="etched"></div>
      <div class="d-flex align-items-center"><input type="checkbox" class="ck" id="sm"><label for="sm">Show more properties</label></div>
    </div></div>
  <div class="dns-row d-flex align-items-center"><input type="checkbox" class="ck" id="dns"><label for="dns">Do not show this dialog when creating a new Image</label></div>
  <div class="warn-row d-flex align-items-center"><svg width="24" height="24"><path d="M12 2l10 20H2z" fill="#ffc850" stroke="#d89020" stroke-width="2.500" stroke-linejoin="round"/><path d="M12 8v7M12 17v3" stroke="#333" stroke-width="3"/></svg>Image: The image is empty and invalid.</div>
  <div class="ok-row d-flex align-items-center ms-sans g11x"><button class="plainbtn me-auto" aria-label="Help"><svg width="32" height="32"><circle cx="16" cy="16" r="14.500" fill="#f1f2f6" stroke="#555c66" stroke-width="1.600"/><path d="M10.500 13c0-7 11-7 11-.5 0 4-5.500 4-5.500 8" fill="none" stroke="#666c80" stroke-width="4"/><circle cx="16" cy="24.500" r="2.300" fill="#555c70"/></svg></button><button class="xpb def">OK</button><button class="xpb">Cancel</button></div>
</section>

<section class="win-file position-absolute" role="dialog" aria-label="Choose Image File">
  <header class="ttl ttl-file d-flex align-items-center"><span class="me-auto">Choose Image File</span><div class="caps pt-0"><button class="cap" aria-label="Help"><svg><path d="M6 8c0-7 10-6 10-1 0 4-5 3-5 8M11 17v3" fill="none" stroke="#fff" stroke-width="3"/></svg></button><button class="cap cap-x" aria-label="Close"><svg><use href="#w-x"/></svg></button></div></header>
  <div class="fgrid">
    <label for="lk" class="ms-sans text-end align-self-center">Look in:</label>
    <div class="d-flex align-items-center ms-sans g11x"><div class="combo look"><select id="lk"><option>Designer</option></select><svg class="i24 fold"><use href="#dio"/></svg><span class="dd"><svg class="i14"><use href="#dn"/></svg></span></div>
      <button class="plainbtn" aria-label="Back"><svg class="i24"><use href="#bk"/></svg></button><button class="plainbtn" aria-label="Up one level"><svg class="i24"><use href="#fup"/></svg></button><button class="plainbtn" aria-label="New folder"><svg class="i24"><use href="#fnw"/></svg></button><button class="plainbtn d-flex align-items-center g2x" aria-label="Views"><svg class="i24"><use href="#vws"/></svg><svg class="caret"><use href="#caret"/></svg></button></div>
    <nav class="places ms-sans">
      <a href="#"><svg class="i48"><use href="#recent"/></svg>My Recent Documents</a><a href="#"><svg class="i48"><use href="#dsktop"/></svg>Desktop</a><a href="#"><svg class="i48"><use href="#docs"/></svg>My Documents</a><a href="#"><svg class="i48"><use href="#comp"/></svg>My Computer</a><a href="#"><svg class="i48"><use href="#netw"/></svg>My Network</a></nav>
    <div>
      <div class="list d-flex flex-column justify-content-between">
        <ul class="files">
          <li><svg><use href="#dir"/></svg>AirForce</li><li><svg><use href="#dir"/></svg>Army</li><li><svg><use href="#dir"/></svg>DoD</li><li><svg><use href="#dir"/></svg>SalesAssets</li><li><svg><use href="#dir"/></svg>software</li><li><svg><use href="#dir"/></svg>workspace.614</li><li><svg><use href="#dir"/></svg>workspace.630</li><li><svg><use href="#dir"/></svg>workspace.GA</li><li><svg><use href="#wsd"/></svg>AccountService.devvm.wsdl</li><li><svg><use href="#wsd"/></svg>AccountService.wsdl</li><li><svg><use href="#xsd"/></svg>annotations.xsd</li><li><svg><use href="#xfd"/></svg>Apis_Job_AppForm-v80.formpart.xfdl</li><li><svg><use href="#xfd"/></svg>Apis_Job_AppForm-v80.xfdl</li><li><svg><use href="#jpg"/></svg>beautifultree.jpg</li><li><svg><use href="#jpg"/></svg>HawthorneBlooming.jpg</li>
          <li><svg><use href="#jpg"/></svg>HawthorneBloomingBackyard.jpg</li><li><svg><use href="#xsd"/></svg>Individual Tax Form.xsd</li><li><svg><use href="#bak"/></svg>Individual Tax Form.xsd.bak</li><li><svg><use href="#xsd"/></svg>MedicalAppt.xsd</li><li><svg><use href="#xsd"/></svg>MedicalPreapproval.xsd</li><li><svg><use href="#jpg"/></svg>new_fineartstudios.jog.JPG</li><li><svg><use href="#jpg"/></svg>Orion.jpg</li><li><svg><use href="#jpg"/></svg>Pleiades.jpg</li><li><svg><use href="#xsd"/></svg>po.xsd</li><li><svg><use href="#txt"/></svg>Readme.txt</li><li><svg><use href="#jpg"/></svg>Saturn2.jpg</li><li><svg><use href="#jpg"/></svg>Saturn.jpg</li><li><svg><use href="#xfd"/></svg>shoppingcart_v1.xfdl</li><li><svg><use href="#xfd"/></svg>shoppingcart_v1-v80.xfdl</li><li><svg><use href="#xsd"/></svg>Tax2.xsd</li>
          <li><svg><use href="#bak"/></svg>Tax2.xsd.bak</li><li><svg><use href="#xfd"/></svg>test.xfdl</li><li><svg><use href="#wsd"/></svg>weather.wsdl</li><li><svg><use href="#xfd"/></svg>weather.xfdl</li>
        </ul>
        <div class="sb sb-h"><div class="sb-b"><svg class="i14"><use href="#lf"/></svg></div><div class="sb-t th-file"></div><div class="sb-b"><svg class="i14"><use href="#rt"/></svg></div></div>
      </div>
      <div class="fields d-flex justify-content-between ms-sans">
        <div class="d-flex flex-column g9x">
          <div class="d-flex align-items-center"><label for="fn">File name:</label><div class="combo"><select id="fn"><option></option></select><span class="dd"><svg class="i14"><use href="#dn"/></svg></span></div></div>
          <div class="d-flex align-items-center"><label for="ft">Files of type:</label><div class="combo"><select id="ft"><option>*.*</option></select><span class="dd"><svg class="i14"><use href="#dn"/></svg></span></div></div>
        </div>
        <div class="d-flex flex-column g8x"><button class="xpb def">Open</button><button class="xpb">Cancel</button></div>
      </div>
    </div>
  </div>
  <svg class="grip position-absolute" viewBox="0 0 18 18"><path d="M14 2h3v3h-3zM8 8h3v3H8zM14 8h3v3h-3zM2 14h3v3H2zM8 14h3v3H8zM14 14h3v3h-3z" fill="#b5b19c"/></svg>
</section>
<svg class="ptr position-absolute" viewBox="0 0 22 34"><path d="M1 2v23l5-5 6 12 4-2-5-11h7z" fill="#fff" stroke="#111" stroke-width="1.600"/></svg>
</div>
<script src="https://cdn.jsdelivr.net/npm/bootstrap@5.3.0/dist/js/bootstrap.bundle.min.js"></script>
</body>
</html>
